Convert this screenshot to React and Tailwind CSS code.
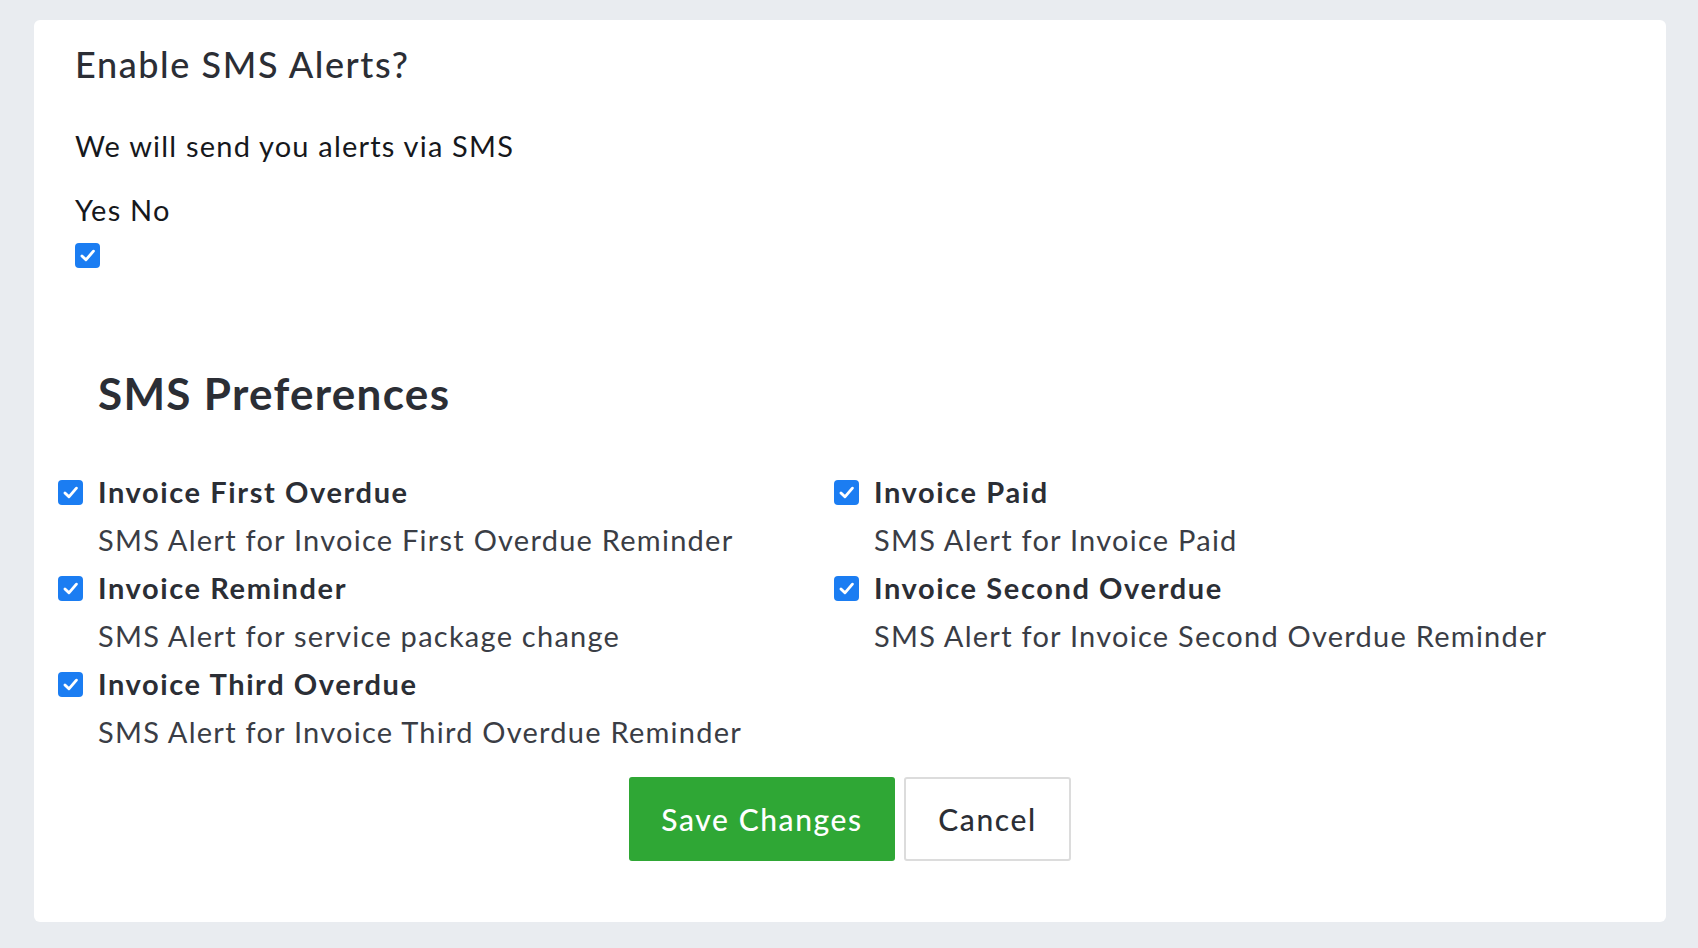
import React, { useState } from 'react';

const prefs = [
  { key: 'firstOverdue', title: 'Invoice First Overdue', desc: 'SMS Alert for Invoice First Overdue Reminder' },
  { key: 'paid', title: 'Invoice Paid', desc: 'SMS Alert for Invoice Paid' },
  { key: 'reminder', title: 'Invoice Reminder', desc: 'SMS Alert for service package change' },
  { key: 'secondOverdue', title: 'Invoice Second Overdue', desc: 'SMS Alert for Invoice Second Overdue Reminder' },
  { key: 'thirdOverdue', title: 'Invoice Third Overdue', desc: 'SMS Alert for Invoice Third Overdue Reminder' },
];

const Box = ({ checked, onChange }) => (
  <button
    type="button"
    onClick={onChange}
    className={`w-[25px] h-[25px] rounded-[4px] flex items-center justify-center shrink-0 ${checked ? 'bg-[#1b7df2]' : 'bg-white border-2 border-[#767676]'}`}
  >
    {checked && (
      <svg viewBox="0 0 24 24" className="w-[19px] h-[19px]" fill="none" stroke="white" strokeWidth="3.6" strokeLinecap="round" strokeLinejoin="round">
        <polyline points="5,12.5 10,17.5 19.5,6.5" />
      </svg>
    )}
  </button>
);

export default function App() {
  const [enabled, setEnabled] = useState(true);
  const [checked, setChecked] = useState(
    prefs.reduce((acc, p) => ({ ...acc, [p.key]: true }), {})
  );

  const toggle = (key) => setChecked({ ...checked, [key]: !checked[key] });

  return (
    <div className="min-h-screen bg-[#e9ecf0] pt-[20px] pb-[26px] pl-[34px] pr-[32px] font-['Lato','Noto_Sans',sans-serif]">
      <div className="bg-white rounded-[6px] min-h-[902px] pb-[60px]">
        <div className="pl-[41px] pt-[22px]">
          <h2 className="text-[36px] leading-[44px] font-medium tracking-[1.6px] text-[#2b2e35]">Enable SMS Alerts?</h2>
          <p className="mt-[42px] text-[29px] leading-[36px] tracking-[1.2px] text-[#16181c]">We will send you alerts via SMS</p>
          <p className="mt-[28px] text-[29px] leading-[36px] tracking-[1.2px] text-[#16181c]">Yes No</p>
          <div className="mt-[15px]">
            <Box checked={enabled} onChange={() => setEnabled(!enabled)} />
          </div>
        </div>

        <h3 className="mt-[98px] pl-[64px] text-[44px] leading-[54px] font-bold tracking-[1.3px] text-[#2b2e35]">SMS Preferences</h3>

        <div className="mt-[48px] pl-[24px] grid grid-cols-[776px_1fr]">
          {prefs.map((p) => (
            <div key={p.key} className="h-[96px]">
              <label className="flex items-center gap-[15px] h-[48px] cursor-pointer">
                <Box checked={checked[p.key]} onChange={() => toggle(p.key)} />
                <span className="text-[29px] font-bold tracking-[1.6px] text-[#2b2e35]">{p.title}</span>
              </label>
              <p className="pl-[40px] h-[48px] flex items-center text-[29px] tracking-[1.25px] text-[#3a3d45]">{p.desc}</p>
            </div>
          ))}
        </div>

        <div className="mt-[21px] flex justify-center gap-[9px]">
          <button className="w-[266px] h-[84px] rounded-[3px] bg-[#2fa735] text-white text-[30px] font-medium tracking-[1.6px]">
            Save Changes
          </button>
          <button className="w-[167px] h-[84px] rounded-[3px] bg-white border-2 border-[#dcdcdc] text-[#2b2e35] text-[30px] font-medium tracking-[1.6px]">
            Cancel
          </button>
        </div>
      </div>
    </div>
  );
}
